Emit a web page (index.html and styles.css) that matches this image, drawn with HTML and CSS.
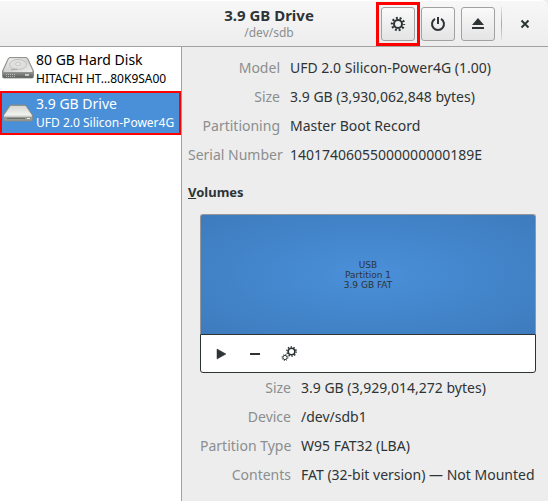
FILE: index.html
```html
<!DOCTYPE html>
<html lang="en">
<head>
<meta charset="utf-8">
<title>3.9 GB Drive</title>
<link rel="stylesheet" href="styles.css">
</head>
<body>
<header class="titlebar">
  <div class="heading">
    <h1>3.9 GB Drive</h1>
    <p>/dev/sdb</p>
  </div>
  <div class="actions">
    <span class="marked"><button class="tool" type="button" aria-label="Drive options">
      <svg width="16" height="16" viewBox="0 0 16 16"><circle cx="8" cy="8" r="4" fill="none" stroke="#2e3436" stroke-width="2"/><circle cx="8" cy="8" r="6" fill="none" stroke="#2e3436" stroke-width="2.4" stroke-dasharray="1.9 1.87" stroke-dashoffset="0.95"/></svg>
    </button></span>
    <button class="tool" type="button" aria-label="Power off">
      <svg width="16" height="16" viewBox="0 0 16 16"><path d="M5 2.800A6 6 0 1 0 11 2.800M8 1v7" fill="none" stroke="#2e3436" stroke-width="2"/></svg>
    </button>
    <button class="tool" type="button" aria-label="Eject">
      <svg width="16" height="16" viewBox="0 0 16 16"><path d="M8 2l6 7H2zM2 11h12v2H2z" fill="#2e3436"/></svg>
    </button>
    <span class="separator"></span>
    <button class="close" type="button" aria-label="Close">
      <svg width="16" height="16" viewBox="0 0 16 16"><path d="M4.500 4.500l7 7M11.500 4.500l-7 7" stroke="#2e3436" stroke-width="2"/></svg>
    </button>
  </div>
</header>
<main class="content">
  <nav class="drives">
    <a class="drive" href="#hdd">
      <svg width="32" height="24" viewBox="0 0 32 24">
        <defs>
          <linearGradient id="front" x1="0" x2="0" y1="0" y2="1"><stop offset="0" stop-color="#b8b9b7"/><stop offset=".65" stop-color="#a3a4a2"/><stop offset="1" stop-color="#555753"/></linearGradient>
          <linearGradient id="top" x1="0" x2="1" y1="0" y2="1"><stop offset="0" stop-color="#f4f4f4"/><stop offset=".5" stop-color="#d5d6d4"/><stop offset="1" stop-color="#eeeeee"/></linearGradient>
        </defs>
        <path d="M.5 14L6 2q.5-1.500 2-1.500h16q1.500 0 2 1.500l5.500 12v5.500q0 1.500-1.500 1.500H2q-1.500 0-1.500-1.500z" fill="url(#front)" stroke="#81837f" stroke-width=".8"/>
        <path d="M1.500 14L7 2q.3-.8 1.500-.8h15q1.200 0 1.500.8l5.500 12q0 1-1.500 1H3q-1.500 0-1.500-1z" fill="url(#top)"/>
        <ellipse cx="16" cy="7.500" rx="8.500" ry="5" fill="#dfe0dd" stroke="#b9bbb7" stroke-width=".8"/>
        <ellipse cx="16" cy="7" rx="2.500" ry="1.300" fill="#f8f8f8" stroke="#b0b2ae" stroke-width=".7"/>
        <path d="M15 12l-6 1" stroke="#a5a7a3"/>
        <path d="M4 17.500h9M4 19.500h9" stroke="#d5d7d3" stroke-width=".7" stroke-dasharray="1 1"/>
        <path d="M23 18h4" stroke="#e2e4e0" stroke-width="1.500"/>
      </svg>
      <span class="label"><strong>80 GB Hard Disk</strong><small>HITACHI HT…80K9SA00</small></span>
    </a>
    <a class="drive selected" href="#usb" aria-current="true">
      <svg width="32" height="24" viewBox="0 0 32 24">
        <defs>
          <linearGradient id="case" x1="0" x2="0" y1="0" y2="1"><stop offset="0" stop-color="#d5d7d2"/><stop offset="1" stop-color="#f4f4f1"/></linearGradient>
        </defs>
        <path d="M1.500 14l6-9q.5-1 2-1h13q1.500 0 2 1l6 9v4.500q0 1.500-1.500 1.500H3q-1.500 0-1.500-1.500z" fill="#989a94" stroke="#888a84" stroke-width=".8"/>
        <path d="M2 14.500L8.500 5h15L30 14.500z" fill="url(#case)"/>
        <path d="M2 15h28" stroke="#fff"/>
        <path d="M5 17.500h18" stroke="#6c6f69"/>
        <path d="M25 17.500h3" stroke="#e8e9e5"/>
      </svg>
      <span class="label"><strong>3.9 GB Drive</strong><small>UFD 2.0 Silicon-Power4G</small></span>
    </a>
  </nav>
  <section class="details">
    <dl class="facts">
      <dt>Model</dt><dd>UFD 2.0 Silicon-Power4G (1.00)</dd>
      <dt>Size</dt><dd>3.9 GB (3,930,062,848 bytes)</dd>
      <dt>Partitioning</dt><dd>Master Boot Record</dd>
      <dt>Serial Number</dt><dd>14017406055000000000189E</dd>
    </dl>
    <h2><u>V</u>olumes</h2>
    <div class="volumes">
      <div class="map">USB<br>Partition 1<br>3.9 GB FAT</div>
      <div class="toolbar">
        <button type="button" aria-label="Mount">
          <svg width="16" height="16" viewBox="0 0 16 16"><path d="M4 3v10l9-5z" fill="#2e3436" stroke="#2e3436" stroke-width=".5"/></svg>
        </button>
        <button type="button" aria-label="Delete partition">
          <svg width="16" height="16" viewBox="0 0 16 16"><path d="M3 7h10v2H3z" fill="#2e3436"/></svg>
        </button>
        <button type="button" aria-label="Partition options">
          <svg width="16" height="16" viewBox="0 0 16 16"><g fill="none" stroke="#2e3436"><circle cx="10.500" cy="5.500" r="3.300" stroke-width="1.600"/><circle cx="10.500" cy="5.500" r="4.600" stroke-width="1.500" stroke-dasharray="1.400 1.490"/><circle cx="4" cy="11.500" r="2.100" stroke-width="1"/><circle cx="4" cy="11.500" r="3" stroke-width="1" stroke-dasharray="1.100 1.256"/></g></svg>
        </button>
      </div>
    </div>
    <dl class="facts volume-facts">
      <dt>Size</dt><dd>3.9 GB (3,929,014,272 bytes)</dd>
      <dt>Device</dt><dd>/dev/sdb1</dd>
      <dt>Partition Type</dt><dd>W95 FAT32 (LBA)</dd>
      <dt>Contents</dt><dd>FAT (32-bit version) — Not Mounted</dd>
    </dl>
  </section>
</main>
</body>
</html>
```

FILE: styles.css
```css
* {
  box-sizing: border-box;
}

body {
  margin: 0;
  min-height: 100vh;
  display: flex;
  flex-direction: column;
  background: #ededed;
  color: #2e3436;
  font: 14px/20px "Noto Sans", sans-serif;
}

h1, h2, p, dl, dd {
  margin: 0;
}

svg {
  display: block;
  flex: none;
}

button {
  display: grid;
  place-items: center;
  padding: 0;
  border: 0;
  background: none;
}

.titlebar {
  display: grid;
  grid-template-columns: 1fr auto 1fr;
  align-items: center;
  height: 47px;
  padding-right: 6px;
  border-top: 1px solid #fff;
  border-bottom: 1px solid #a1a1a1;
  border-radius: 0 7px 0 0;
  background: linear-gradient(#f7f7f7, #ededed);
}

.heading {
  grid-column: 2;
  margin-right: 4px;
  text-align: center;
  white-space: nowrap;
}

.heading h1 {
  font-size: 15px;
  line-height: 18px;
}

.heading p {
  color: #8b8e8f;
  font-size: 12px;
  line-height: 18px;
}

.actions {
  display: flex;
  justify-content: flex-end;
  align-items: center;
}

.marked {
  margin-right: 1px;
  padding: 2px;
  border: 3px solid #f00;
}

.tool {
  width: 34px;
  height: 34px;
  margin-right: 6px;
  border: 1px solid #a1a1a1;
  border-radius: 3px;
  background: linear-gradient(#fafafa, #e4e4e4);
}

.marked .tool {
  margin: 0;
}

.separator {
  width: 1px;
  height: 34px;
  background: linear-gradient(#e4e4e4, #a8a8a8, #e4e4e4);
}

.close {
  width: 34px;
  height: 34px;
  margin-left: 6px;
}

.content {
  flex: 1;
  display: grid;
  grid-template-columns: 182px 1fr;
}

.drives {
  border-right: 1px solid #a1a1a1;
  background: #fff;
}

.drive {
  display: flex;
  align-items: center;
  gap: 2px;
  height: 44px;
  padding-left: 2px;
  color: #000;
  text-decoration: none;
  white-space: nowrap;
}

.drive.selected {
  padding: 0;
  border: 2px solid #f00;
  background: #4a90d9;
  color: #fff;
}

.label strong, .label small {
  display: block;
  font-weight: 400;
}

.label small {
  font-size: 12px;
  line-height: 18px;
}

.details {
  padding: 11px 12px 12px 6px;
}

.facts {
  display: grid;
  grid-template-columns: 92px 1fr;
  gap: 9px 10px;
  white-space: nowrap;
}

.facts dt {
  color: #8b8e8f;
  text-align: right;
}

.details h2 {
  margin: 17px 0 12px;
  font-size: 13px;
  line-height: 20px;
}

.volumes {
  margin-left: 12px;
}

.map {
  display: grid;
  place-content: center;
  height: 120px;
  border: 1px solid #979797;
  border-bottom: 0;
  border-radius: 3px 3px 0 0;
  background: radial-gradient(farthest-corner, #4a90d9, #3d7bbd);
  font: 9px/10px "DejaVu Sans", sans-serif;
  text-align: center;
}

.toolbar {
  display: flex;
  align-items: center;
  gap: 2px;
  height: 39px;
  padding-left: 4px;
  border: 1px solid #2e3436;
  border-radius: 0 0 3px 3px;
  background: #fff;
}

.toolbar button {
  width: 32px;
  height: 32px;
}

.volume-facts {
  grid-template-columns: 91px 1fr;
  margin: 5px 0 0 12px;
}
```
